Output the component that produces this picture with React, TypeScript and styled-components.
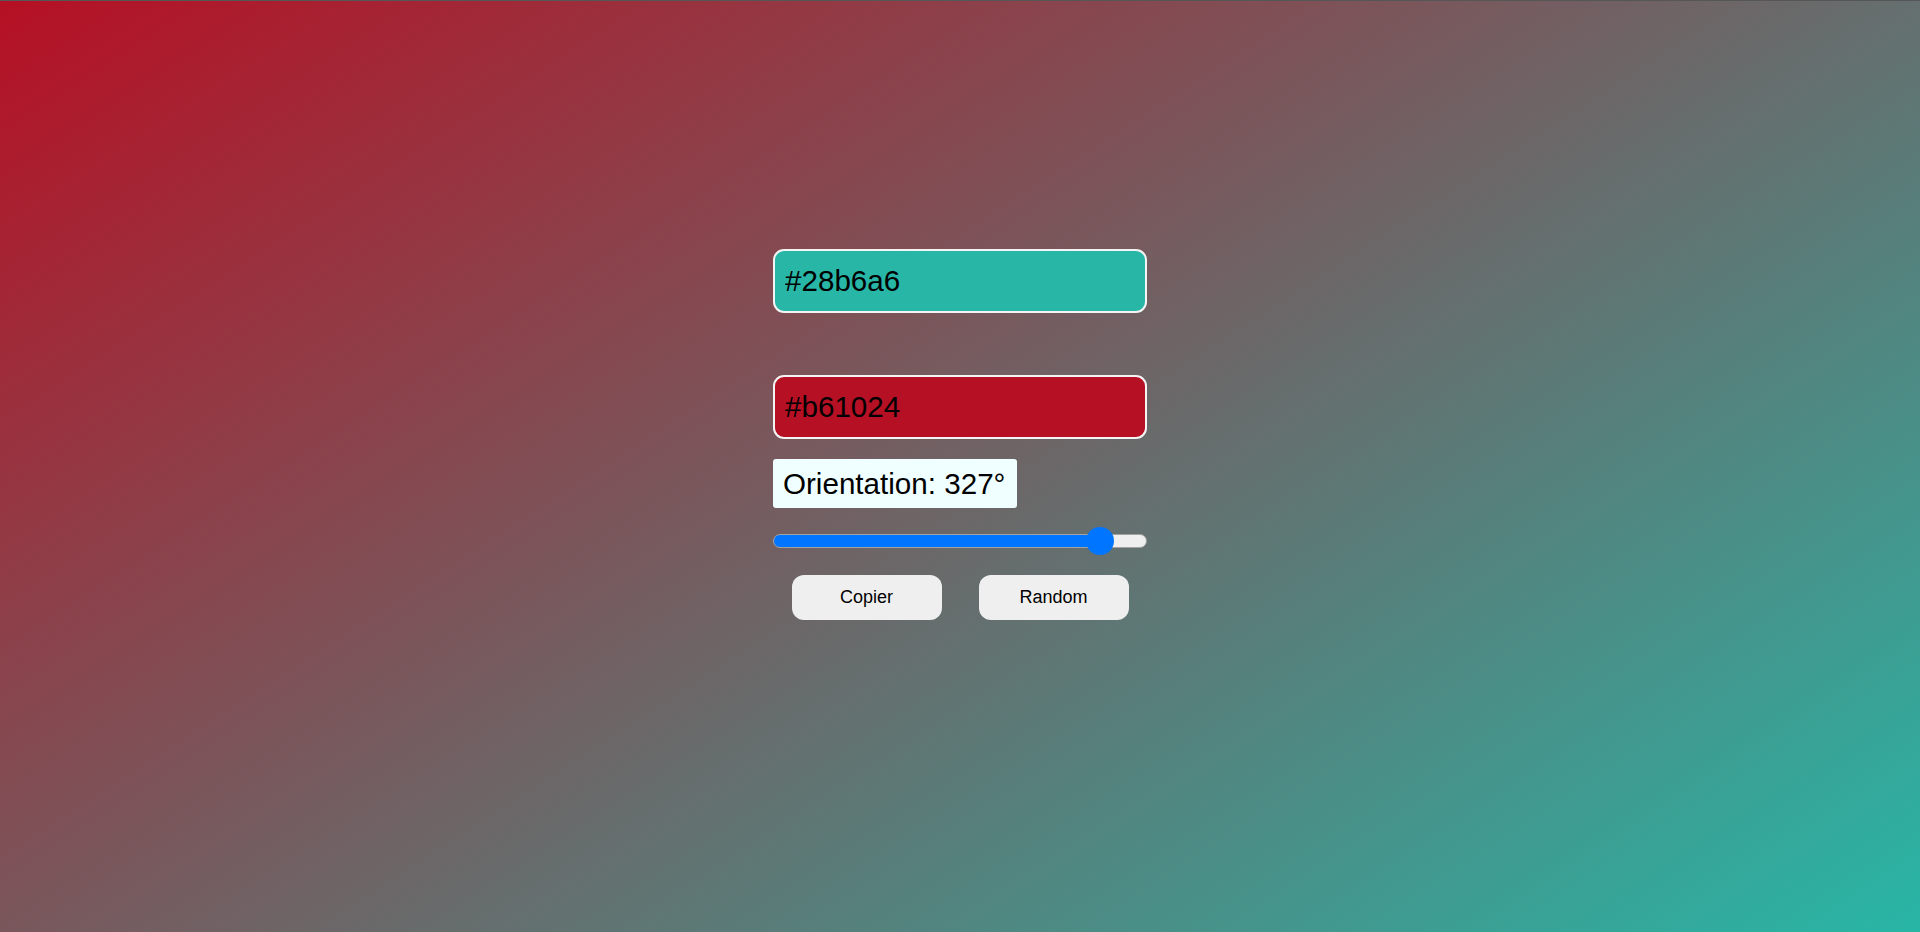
import React, { useState } from "react";
import styled, { createGlobalStyle } from "styled-components";

const GlobalStyle = createGlobalStyle`
  html, body {
    margin: 0;
    padding: 0;
    height: 100%;
  }
  body {
    font-family: "Liberation Sans", Arial, sans-serif;
  }
  * { box-sizing: border-box; }
`;

const Page = styled.div<{ $angle: number; $c1: string; $c2: string }>`
  min-height: 932px;
  height: 100vh;
  border-top: 1px solid #555757;
  background: linear-gradient(${(p) => p.$angle}deg, ${(p) => p.$c1}, ${(p) => p.$c2});
  display: flex;
  flex-direction: column;
  align-items: center;
  padding-top: 248px;
`;

const Panel = styled.div`
  width: 374px;
  display: flex;
  flex-direction: column;
  align-items: flex-start;
`;

const ColorField = styled.input<{ $bg: string; $spaced?: boolean }>`
  width: 374px;
  height: 64px;
  border: 2px solid #f4f4f4;
  border-radius: 11px;
  background: ${(p) => p.$bg};
  color: #000;
  font-family: "Liberation Sans", Arial, sans-serif;
  font-size: 29.6px;
  padding: 0 10px;
  margin: 0 0 ${(p) => (p.$spaced ? "62px" : "20px")} 0;
  outline: none;
`;

const Label = styled.div`
  background: #f0ffff;
  color: #000;
  font-size: 29.6px;
  line-height: 35px;
  padding: 7px 10px 7px 10px;
  border-radius: 3px;
  width: 244px;
  white-space: nowrap;
  margin-bottom: 19px;
`;

const Range = styled.input`
  -webkit-appearance: none;
  appearance: none;
  width: 374px;
  height: 28px;
  margin: 0 0 20px 0;
  padding: 0;
  background: transparent;
  cursor: pointer;

  &::-webkit-slider-runnable-track {
    height: 14px;
    border-radius: 7px;
    border: 1px solid #a3a3a3;
    background: linear-gradient(
      to right,
      #0075ff var(--fill),
      #efefef var(--fill)
    );
  }

  &::-webkit-slider-thumb {
    -webkit-appearance: none;
    appearance: none;
    width: 28px;
    height: 28px;
    border-radius: 50%;
    background: #0075ff;
    border: none;
    margin-top: -8px;
  }

  &::-moz-range-track {
    height: 14px;
    border-radius: 7px;
    border: 1px solid #a3a3a3;
    background: #efefef;
  }
  &::-moz-range-progress {
    height: 14px;
    border-radius: 7px;
    background: #0075ff;
  }
  &::-moz-range-thumb {
    width: 28px;
    height: 28px;
    border-radius: 50%;
    background: #0075ff;
    border: none;
  }
`;

const ButtonRow = styled.div`
  width: 374px;
  display: flex;
  justify-content: space-around;
`;

const ActionButton = styled.button`
  width: 150px;
  height: 45px;
  border: none;
  border-radius: 12px;
  background: #efefef;
  color: #000;
  font-family: "Liberation Sans", Arial, sans-serif;
  font-size: 18px;
  cursor: pointer;
`;

const randomHex = () =>
  "#" +
  Math.floor(Math.random() * 0xffffff)
    .toString(16)
    .padStart(6, "0");

export default function App() {
  const [c1, setC1] = useState("#28b6a6");
  const [c2, setC2] = useState("#b61024");
  const [angle, setAngle] = useState(327);

  const width = 374;
  const thumb = 28;
  const fill = thumb / 2 + (angle / 360) * (width - thumb);

  const copy = () => {
    const css = `background: linear-gradient(${angle}deg, ${c1}, ${c2});`;
    try {
      navigator.clipboard?.writeText(css);
    } catch (e) {
      /* ignore */
    }
  };

  const random = () => {
    setC1(randomHex());
    setC2(randomHex());
    setAngle(Math.floor(Math.random() * 361));
  };

  return (
    <>
      <GlobalStyle />
      <Page $angle={angle} $c1={c1} $c2={c2}>
        <Panel>
          <ColorField
            $bg={c1}
            $spaced
            value={c1}
            onChange={(e) => setC1(e.target.value)}
          />
          <ColorField
            $bg={c2}
            value={c2}
            onChange={(e) => setC2(e.target.value)}
          />
          <Label>Orientation: {angle}°</Label>
          <Range
            type="range"
            min={0}
            max={360}
            value={angle}
            onChange={(e) => setAngle(Number(e.target.value))}
            style={{ ["--fill" as any]: `${fill}px` }}
          />
          <ButtonRow>
            <ActionButton onClick={copy}>Copier</ActionButton>
            <ActionButton onClick={random}>Random</ActionButton>
          </ButtonRow>
        </Panel>
      </Page>
    </>
  );
}
